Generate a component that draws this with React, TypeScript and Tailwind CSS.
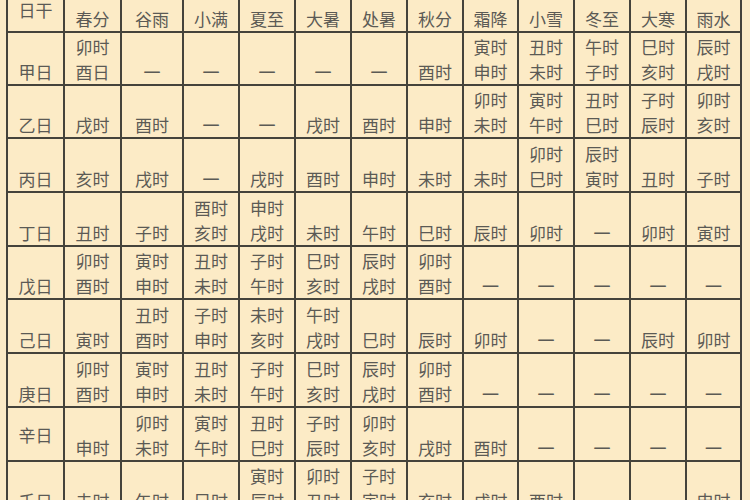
import React from 'react';

const headers = ['日干', '春分', '谷雨', '小满', '夏至', '大暑', '处暑', '秋分', '霜降', '小雪', '冬至', '大寒', '雨水'];

// '-' means no hour, '/' splits two lines
const rows: [string, string[]][] = [
  ['甲日', ['卯时/酉日', '-', '-', '-', '-', '-', '酉时', '寅时/申时', '丑时/未时', '午时/子时', '巳时/亥时', '辰时/戌时']],
  ['乙日', ['戌时', '酉时', '-', '-', '戌时', '酉时', '申时', '卯时/未时', '寅时/午时', '丑时/巳时', '子时/辰时', '卯时/亥时']],
  ['丙日', ['亥时', '戌时', '-', '戌时', '酉时', '申时', '未时', '未时', '卯时/巳时', '辰时/寅时', '丑时', '子时']],
  ['丁日', ['丑时', '子时', '酉时/亥时', '申时/戌时', '未时', '午时', '巳时', '辰时', '卯时', '-', '卯时', '寅时']],
  ['戊日', ['卯时/酉时', '寅时/申时', '丑时/未时', '子时/午时', '巳时/亥时', '辰时/戌时', '卯时/酉时', '-', '-', '-', '-', '-']],
  ['己日', ['寅时', '丑时/酉时', '子时/申时', '未时/亥时', '午时/戌时', '巳时', '辰时', '卯时', '-', '-', '辰时', '卯时']],
  ['庚日', ['卯时/酉时', '寅时/申时', '丑时/未时', '子时/午时', '巳时/亥时', '辰时/戌时', '卯时/酉时', '-', '-', '-', '-', '-']],
  ['辛日', ['申时', '卯时/未时', '寅时/午时', '丑时/巳时', '子时/辰时', '卯时/亥时', '戌时', '酉时', '-', '-', '-', '-']],
  ['壬日', ['未时', '午时', '巳时', '寅时/辰时', '卯时/丑时', '子时/寅时', '亥时', '戌时', '酉时', '-', '-', '申时']],
];

const Cell: React.FC<{ text: string; center?: boolean }> = ({ text, center }) => (
  <div className={`bg-[#fcebc6] flex flex-col items-center ${center ? 'justify-center' : 'justify-end'}`}>
    {text.split('/').map((t, i) => (
      <span key={i} className="leading-[25px]">
        {t === '-' ? '一' : t}
      </span>
    ))}
  </div>
);

export default function App() {
  return (
    <div
      className="w-[750px] h-[500px] overflow-hidden bg-[#fcebc6] text-[17px] text-[#5b5a55]"
      style={{ fontFamily: '"Noto Sans CJK SC", "Noto Sans", sans-serif' }}
    >
      <div className="ml-[6px] -mt-[14px] w-[736px] grid grid-cols-[55px_55px_60px_54px_54px_54px_54px_54px_53px_54px_54px_54px_53px] grid-rows-[43px_51px_51px_52px_52px_51px_52px_52px_52px_51px] gap-[2px] p-[2px] bg-[#45433b]">
        {headers.map((h, i) => (
          <Cell key={h} text={h} center={i === 0} />
        ))}
        {rows.map(([label, cells]) => (
          <React.Fragment key={label}>
            <Cell text={label} center={label === '辛日'} />
            {cells.map((c, j) => (
              <Cell key={j} text={c} />
            ))}
          </React.Fragment>
        ))}
      </div>
    </div>
  );
}
